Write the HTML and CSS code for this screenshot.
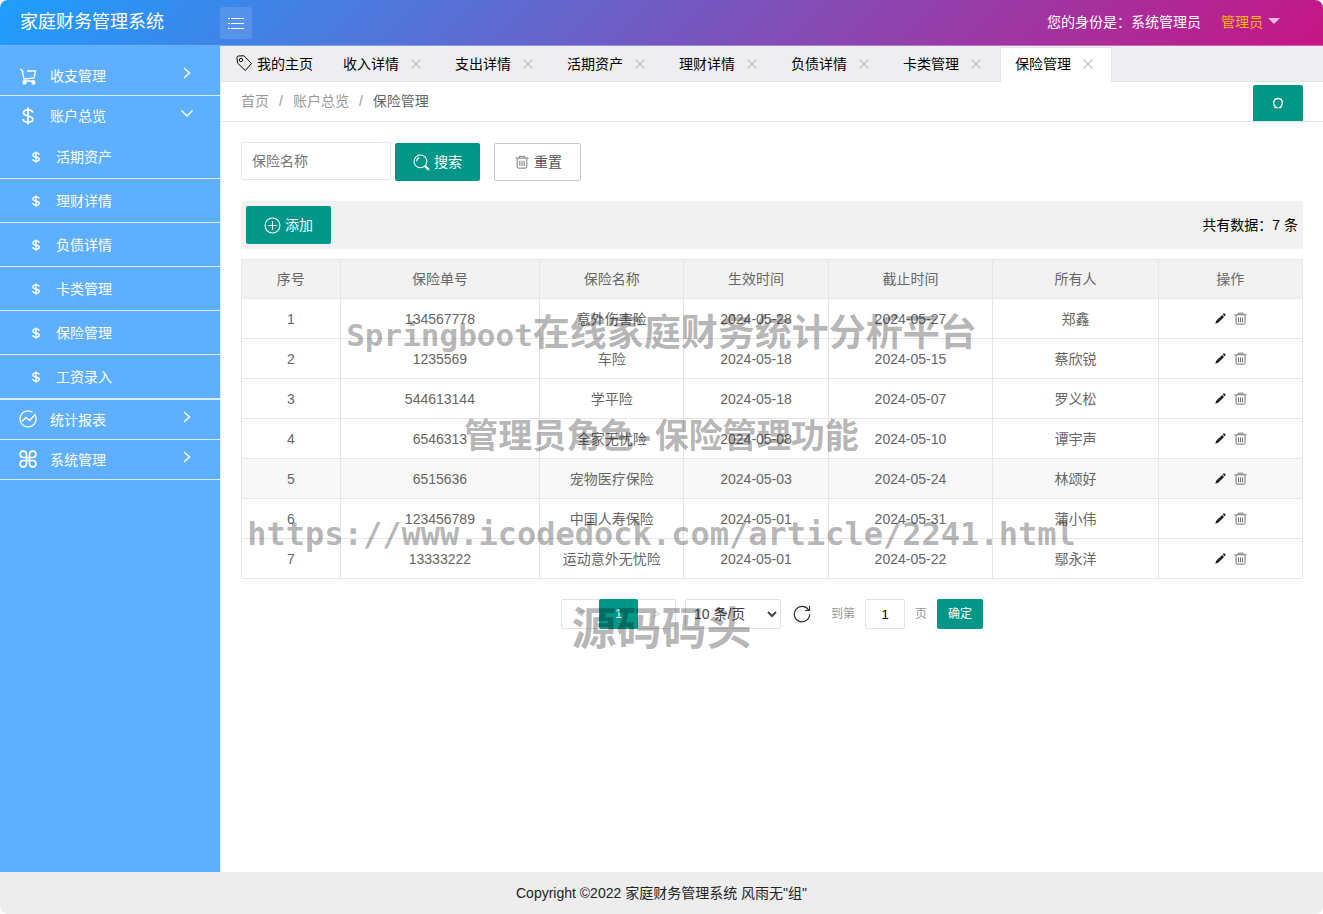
FILE: index.html
```html
<!DOCTYPE html>
<html lang="zh-CN">
<head>
<meta charset="utf-8">
<title>家庭财务管理系统</title>
<link rel="stylesheet" href="styles.css">
</head>
<body>
<svg class="defs" aria-hidden="true">
  <symbol id="i-dollar" viewBox="0 0 16 16"><path d="M12.2 5C12 3.300 10.300 2.500 8 2.500S4 3.500 4 5.200 5.600 7.500 8 8s4.300 1 4.300 2.900S10.500 13.500 8 13.500 3.700 12.500 3.600 10.700M8 .5v15"/></symbol>
  <symbol id="i-right" viewBox="0 0 16 16"><path d="M5 3l5.500 5L5 13"/></symbol>
  <symbol id="i-down" viewBox="0 0 16 16"><path d="M2.500 5.500L8 11l5.500-5.500"/></symbol>
  <symbol id="i-close" viewBox="0 0 18 18"><path d="M4.500 4.500l9 9M13.500 4.500l-9 9"/></symbol>
  <symbol id="i-trash" viewBox="0 0 16 16"><path d="M.5 3.500h15M5 3V1.500h6V3M2.500 4v9.500q0 1.500 1.500 1.500h8q1.500 0 1.500-1.500V4M5.500 6.500v6M8 6.500v6M10.500 6.500v6"/></symbol>
  <symbol id="i-edit" viewBox="0 0 16 16"><path d="M1.500 14.500l1.200-3.700L10 3.600l2.400 2.400-7.300 7.300zM10.700 2.900l1-1q.8-.6 1.600.1l.8.8q.7.800 0 1.500l-1 1z" fill="currentColor" stroke="none"/></symbol>
</svg>

<header class="header">
  <a class="logo" href="#">家庭财务管理系统</a>
  <button class="menu-btn" type="button" aria-label="切换菜单">
    <svg viewBox="0 0 18 14"><path d="M1 2.500h2M4 2.500h13M1 7.500h2M4 7.500h13M1 12.500h2M4 12.500h13"/></svg>
  </button>
  <div class="user">
    <span>您的身份是：系统管理员</span>
    <a class="user-name" href="#">管理员<i class="caret"></i></a>
  </div>
</header>

<div class="body">
  <nav class="side">
    <ul>
      <li><a href="#"><svg class="ic" viewBox="0 0 18 18"><path d="M1 2l2 1 2.500 11H15M3.500 4.500h1M8 4h8.500l-1.500 7-9 1"/><circle cx="5.500" cy="15.500" r="1.500" fill="currentColor"/><circle cx="14.500" cy="15.500" r="1.500" fill="currentColor"/></svg><span>收支管理</span><svg class="arrow"><use href="#i-right"/></svg></a></li>
      <li><a href="#"><svg class="ic bold"><use href="#i-dollar"/></svg><span>账户总览</span><svg class="arrow"><use href="#i-down"/></svg></a>
        <ul class="sub">
          <li><a href="#"><svg class="ic"><use href="#i-dollar"/></svg><span>活期资产</span></a></li>
          <li><a href="#"><svg class="ic"><use href="#i-dollar"/></svg><span>理财详情</span></a></li>
          <li><a href="#"><svg class="ic"><use href="#i-dollar"/></svg><span>负债详情</span></a></li>
          <li><a href="#"><svg class="ic"><use href="#i-dollar"/></svg><span>卡类管理</span></a></li>
          <li><a href="#"><svg class="ic"><use href="#i-dollar"/></svg><span>保险管理</span></a></li>
          <li><a href="#"><svg class="ic"><use href="#i-dollar"/></svg><span>工资录入</span></a></li>
        </ul>
      </li>
      <li><a href="#"><svg class="ic raised" viewBox="0 0 18 18"><path d="M13.500 2.300A8 8 0 1 0 16 5M3 11.500l4-4 3.500 3L16.500 4"/></svg><span>统计报表</span><svg class="arrow"><use href="#i-right"/></svg></a></li>
      <li><a href="#"><svg class="ic raised strong" viewBox="0 0 18 18"><path d="M7.500 7.500H4.200A3.200 3.200 0 1 1 7.500 4.200zM10.500 7.500V4.200a3.200 3.200 0 1 1 3.300 3.300zM7.500 10.500v3.300a3.200 3.200 0 1 1-3.300-3.300zM10.500 10.500h3.300a3.200 3.200 0 1 1-3.300 3.300zM7.500 7.500h3v3h-3z"/></svg><span>系统管理</span><svg class="arrow"><use href="#i-right"/></svg></a></li>
    </ul>
  </nav>

  <main class="main">
    <div class="tabs">
      <a class="tab" href="#"><svg class="tag" viewBox="0 0 16 16"><path d="M1 2.500Q1 1 2.500 1L8 .8l7.500 7.700-6.200 7L1.500 8z"/><circle cx="5" cy="5" r="1.700"/></svg>我的主页</a>
      <a class="tab" href="#">收入详情<svg class="x"><use href="#i-close"/></svg></a>
      <a class="tab" href="#">支出详情<svg class="x"><use href="#i-close"/></svg></a>
      <a class="tab" href="#">活期资产<svg class="x"><use href="#i-close"/></svg></a>
      <a class="tab" href="#">理财详情<svg class="x"><use href="#i-close"/></svg></a>
      <a class="tab" href="#">负债详情<svg class="x"><use href="#i-close"/></svg></a>
      <a class="tab" href="#">卡类管理<svg class="x"><use href="#i-close"/></svg></a>
      <a class="tab active" href="#">保险管理<svg class="x"><use href="#i-close"/></svg></a>
    </div>

    <div class="crumbs">
      <a href="#">首页</a><span class="sep">/</span><a href="#">账户总览</a><span class="sep">/</span><span class="here">保险管理</span>
      <button class="refresh" type="button" aria-label="刷新"><svg viewBox="0 0 12 12"><path d="M2.500 10.500H4.500C.2 7.500 1 1.500 6 1.500s5.800 6 1.500 9h2"/></svg></button>
    </div>

    <div class="content">
      <form class="search">
        <input class="field" type="text" placeholder="保险名称" aria-label="保险名称">
        <button class="btn" type="button"><svg viewBox="0 0 16 16"><circle cx="7" cy="7" r="6"/><path d="M3.500 7q0-3 2.500-3.500"/><path class="thick" d="M11.500 11.500l3.500 3.500"/></svg>搜索</button>
        <button class="btn plain" type="reset"><svg><use href="#i-trash"/></svg>重置</button>
      </form>

      <div class="toolbar">
        <button class="btn" type="button"><svg viewBox="0 0 16 16"><circle cx="8" cy="8" r="7"/><path d="M8 4v8M4 8h8"/></svg>添加</button>
        <span class="count">共有数据：7 条</span>
      </div>

      <table class="grid">
        <colgroup><col class="c-no"><col class="c-id"><col class="c-name"><col class="c-date"><col class="c-end"><col class="c-owner"><col class="c-act"></colgroup>
        <thead><tr><th>序号</th><th>保险单号</th><th>保险名称</th><th>生效时间</th><th>截止时间</th><th>所有人</th><th>操作</th></tr></thead>
        <tbody>
          <tr><td>1</td><td>134567778</td><td>意外伤害险</td><td>2024-05-28</td><td>2024-05-27</td><td>郑鑫</td><td><div class="acts"><a href="#" aria-label="编辑"><svg><use href="#i-edit"/></svg></a><a href="#" aria-label="删除"><svg><use href="#i-trash"/></svg></a></div></td></tr>
          <tr><td>2</td><td>1235569</td><td>车险</td><td>2024-05-18</td><td>2024-05-15</td><td>蔡欣锐</td><td><div class="acts"><a href="#" aria-label="编辑"><svg><use href="#i-edit"/></svg></a><a href="#" aria-label="删除"><svg><use href="#i-trash"/></svg></a></div></td></tr>
          <tr><td>3</td><td>544613144</td><td>学平险</td><td>2024-05-18</td><td>2024-05-07</td><td>罗义松</td><td><div class="acts"><a href="#" aria-label="编辑"><svg><use href="#i-edit"/></svg></a><a href="#" aria-label="删除"><svg><use href="#i-trash"/></svg></a></div></td></tr>
          <tr><td>4</td><td>6546313</td><td>全家无忧险</td><td>2024-05-08</td><td>2024-05-10</td><td>谭宇声</td><td><div class="acts"><a href="#" aria-label="编辑"><svg><use href="#i-edit"/></svg></a><a href="#" aria-label="删除"><svg><use href="#i-trash"/></svg></a></div></td></tr>
          <tr class="hover"><td>5</td><td>6515636</td><td>宠物医疗保险</td><td>2024-05-03</td><td>2024-05-24</td><td>林颂好</td><td><div class="acts"><a href="#" aria-label="编辑"><svg><use href="#i-edit"/></svg></a><a href="#" aria-label="删除"><svg><use href="#i-trash"/></svg></a></div></td></tr>
          <tr><td>6</td><td>123456789</td><td>中国人寿保险</td><td>2024-05-01</td><td>2024-05-31</td><td>蒲小伟</td><td><div class="acts"><a href="#" aria-label="编辑"><svg><use href="#i-edit"/></svg></a><a href="#" aria-label="删除"><svg><use href="#i-trash"/></svg></a></div></td></tr>
          <tr><td>7</td><td>13333222</td><td>运动意外无忧险</td><td>2024-05-01</td><td>2024-05-22</td><td>鄢永洋</td><td><div class="acts"><a href="#" aria-label="编辑"><svg><use href="#i-edit"/></svg></a><a href="#" aria-label="删除"><svg><use href="#i-trash"/></svg></a></div></td></tr>
        </tbody>
      </table>

      <div class="pager">
        <div class="pages"><a href="#">&lt;</a><a class="cur" href="#">1</a><a href="#">&gt;</a></div>
        <select aria-label="每页条数"><option>10 条/页</option></select>
        <button class="reload" type="button" aria-label="刷新列表"><svg viewBox="0 0 18 18"><path d="M15.500 5A7.700 7.700 0 1 0 16.700 9.500M16.500 1v4.500H12"/></svg></button>
        <label for="goto">到第</label>
        <input id="goto" type="text" value="1">
        <span class="unit">页</span>
        <button class="go" type="button">确定</button>
      </div>
    </div>
  </main>
</div>

<footer class="footer">Copyright ©2022 家庭财务管理系统 风雨无"组"</footer>

<div class="watermark">
  <p class="w1"><span>Springboot</span>在线家庭财务统计分析平台</p>
  <p class="w2">管理员角色<span>-</span>保险管理功能</p>
  <p class="w3"><span>https://www.icodedock.com/article/2241.html</span></p>
  <p class="w4">源码码头</p>
</div>
</body>
</html>
```

FILE: styles.css
```css
* { box-sizing: border-box; }
html { background: #fff; }
body {
  margin: 0;
  min-height: 100vh;
  display: flex;
  flex-direction: column;
  position: relative;
  overflow: hidden;
  border-radius: 8px;
  font: 14px/20px "Liberation Sans", "Noto Sans CJK SC", sans-serif;
  color: #000;
}
ul, p { margin: 0; padding: 0; list-style: none; }
a { color: inherit; text-decoration: none; }
button, input, select { font: inherit; margin: 0; }
button { cursor: pointer; }
svg { fill: none; stroke: currentColor; display: block; }
.defs { display: none; }

.header {
  height: 46px;
  display: flex;
  align-items: center;
  background: linear-gradient(135deg, #1e9fff, #c71585);
  border-bottom: 1px solid rgba(255, 255, 255, .3);
  color: #fff;
}
.logo { width: 220px; padding-left: 20px; font-size: 18px; line-height: 44px; padding-bottom: 2px; }
.menu-btn {
  width: 32px;
  height: 32px;
  padding: 0;
  border: 0;
  border-radius: 3px;
  background: rgba(255, 255, 255, .12);
  color: #fff;
  display: grid;
  place-items: center;
}
.menu-btn svg { width: 18px; height: 14px; }
.user { margin-left: auto; padding: 0 43px 2px 0; display: flex; gap: 20px; }
.user-name { color: #ffb800; display: flex; }
.caret { margin: 6px 0 0 5px; border: 6px solid transparent; border-top-color: rgba(255, 255, 255, .7); border-bottom: 0; height: 0; }

.body { flex: 1; display: flex; }
.side { width: 221px; flex: none; padding-top: 10px; background: #5fafff; border-right: 1px solid #e2e8f0; color: #fff; }
.side a { display: flex; align-items: center; height: 39px; padding: 0 25px 0 19px; }
.side > ul > li, .sub li { border-bottom: 1px solid #dcecff; }
.side .ic { width: 18px; height: 18px; margin-right: 13px; stroke-width: 1.3; }
.side .bold { stroke-width: 1.5; }
.side .strong { stroke-width: 1.6; }
.side .raised { margin-bottom: 2px; }
.side .arrow { width: 16px; height: 16px; margin: 0 0 5px auto; stroke-width: 1.4; }
.side .sub a { height: 43px; padding-left: 30px; }
.side .sub .ic { width: 12px; height: 12px; margin-right: 14px; stroke-width: 1.8; }

.main { flex: 1; min-width: 0; }
.tabs { display: flex; height: 36px; background: #eeeef0; border-bottom: 1px solid #e2e2e2; }
.tab { display: flex; align-items: center; height: 36px; padding: 0 15px; }
.tab .x { width: 18px; height: 18px; margin-left: 8px; color: #c2c2c2; stroke-width: 1.4; }
.tag { width: 16px; height: 16px; margin: 0 5px 2px 0; }
.tab.active { height: 35px; margin-top: 1px; background: #fff; border: 1px solid #e2e2e2; border-width: 1px 1px 0; padding: 0 14px 2px; }

.crumbs { display: flex; align-items: center; height: 40px; padding: 0 20px 0; border-bottom: 1px solid #e5e5e5; color: #999; line-height: 38px; }
.crumbs > a, .crumbs > span { align-self: flex-start; }
.sep { margin: 0 10px; }
.here { color: #666; }
.refresh {
  width: 50px;
  height: 36px;
  margin-left: auto;
  align-self: flex-end;
  padding: 0;
  border: 0;
  border-radius: 2px 2px 0 0;
  background: #009688;
  color: #fff;
  display: grid;
  place-items: center;
}
.refresh svg { width: 12px; height: 12px; stroke-width: 1.3; }

.content { padding: 20px; }
.search { display: flex; align-items: flex-start; }
.field { width: 150px; height: 38px; padding: 0 10px; border: 1px solid #e6e6e6; border-radius: 2px; background: #fff; }
.field::placeholder { color: #757575; }
.btn {
  height: 38px;
  padding: 0 18px;
  border: 0;
  border-radius: 2px;
  background: #009688;
  color: #fff;
  display: flex;
  align-items: center;
  gap: 4px;
}
.btn svg { width: 17px; height: 17px; }
.btn .thick { stroke-width: 2.2; }
.search .btn { margin: 1px 0 0 4px; }
.search .plain { margin-left: 14px; background: #fff; border: 1px solid #c9c9c9; color: #555; padding: 0 18px 0 20px; }
.plain svg { width: 14px; height: 14px; margin-right: 1px; color: #666; }
.toolbar {
  display: flex;
  align-items: center;
  justify-content: space-between;
  margin: 20px 0 10px;
  padding: 5px;
  background: #f1f1f1;
  border-radius: 2px;
}

.grid { width: 100%; table-layout: fixed; border-collapse: collapse; color: #666; }
.grid th, .grid td { height: 40px; padding: 0; border: 1px solid #e6e6e6; text-align: center; font-weight: 400; }
.grid th { height: 39px; }
.grid thead { background: #f2f2f2; }
.grid .hover { background: #f8f8f8; }
.c-no { width: 9.3%; }
.c-id { width: 18.8%; }
.c-name, .c-date, .c-act { width: 13.6%; }
.c-end { width: 15.5%; }
.c-owner { width: 15.6%; }
.acts { display: flex; justify-content: center; gap: 7px; color: #222; }
.acts svg { width: 13px; height: 13px; }
.acts a + a { color: #555; }

.pager { display: flex; justify-content: center; align-items: center; margin-top: 20px; height: 30px; font-size: 12px; color: #999; }
.pages { display: flex; border: 1px solid #e2e2e2; border-radius: 2px; height: 30px; color: #d2d2d2; }
.pages a { width: 37px; line-height: 28px; text-align: center; }
.pages .cur { width: 39px; line-height: 30px; margin: -1px 0; background: #009688; color: #fff; border-radius: 2px; }
.pager select { width: 96px; height: 30px; margin-left: 9px; padding: 0 0 0 4px; border: 1px solid #e2e2e2; border-radius: 2px; background: #fff; color: #444; font-size: 14px; }
.reload { margin: 0 20px 0 12px; padding: 0; border: 0; background: none; color: #333; }
.reload svg { width: 18px; height: 18px; stroke-width: 1.2; }
.pager input { width: 40px; height: 30px; margin: 0 10px; padding: 0; text-align: center; border: 1px solid #e2e2e2; border-radius: 2px; color: #000; font-size: 13px; }
.go { width: 46px; height: 30px; margin-left: 10px; padding: 0; border: 0; border-radius: 2px; background: #009688; color: #fff; }

.footer { min-height: 42px; line-height: 42px; background: #ededed; text-align: center; color: #222; }

/* Watermark lies over the page and lets clicks through */
.watermark { position: absolute; inset: 0; pointer-events: none; color: rgba(0, 0, 0, .3); font-weight: 700; text-align: center; white-space: nowrap; }
.watermark p { position: absolute; left: 0; right: 0; line-height: 60px; }
.watermark span { font-family: "DejaVu Sans Mono", monospace; }
.w1 { top: 304px; font-size: 37px; }
.w1 span { font-size: 31px; }
.w2 { top: 406px; font-size: 34px; }
.w3 { top: 504px; font-size: 32px; }
.w4 { top: 600px; font-size: 45px; }
```
